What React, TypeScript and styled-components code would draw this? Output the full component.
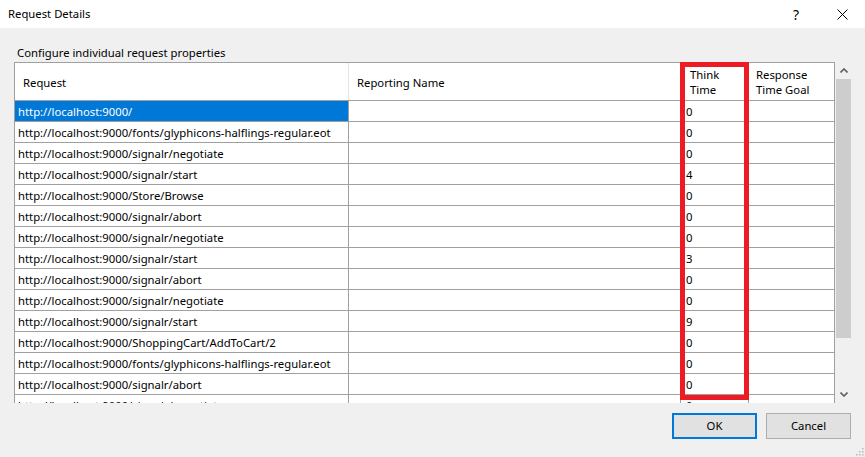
import React from "react";
import styled, { createGlobalStyle } from "styled-components";

const GlobalStyle = createGlobalStyle`
  html, body {
    margin: 0;
    padding: 0;
    background: #f0f0f0;
  }
  body {
    font-family: "Noto Sans", "Open Sans", sans-serif;
    font-size: 11.3px;
    color: #000;
  }
`;

const FONT = `"Noto Sans", "Open Sans", sans-serif`;

const Window = styled.div`
  position: relative;
  width: 865px;
  height: 457px;
  background: #f0f0f0;
  display: flex;
  flex-direction: column;
  overflow: hidden;
  font-family: ${FONT};
  font-size: 11.3px;
`;

const TitleBar = styled.div`
  height: 28px;
  flex: 0 0 28px;
  background: #ffffff;
  display: flex;
  align-items: center;
  padding-left: 8px;
`;

const Title = styled.div`
  flex: 1;
  line-height: 16px;
  margin-top: -1px;
`;

const TitleButton = styled.div`
  width: 46px;
  height: 28px;
  display: flex;
  align-items: center;
  justify-content: center;
  font-size: 14px;
`;

const Body = styled.div`
  display: flex;
  flex-direction: column;
  padding: 0 13px 0 14px;
`;

const Caption = styled.div`
  height: 34px;
  display: flex;
  align-items: flex-end;
  padding: 0 0 1px 3px;
  box-sizing: border-box;
  line-height: 16px;
`;

const GridArea = styled.div`
  position: relative;
  height: 341px;
  display: flex;
`;

const Table = styled.div`
  width: 821px;
  height: 341px;
  box-sizing: border-box;
  border-top: 1px solid #a0a0a0;
  border-left: 1px solid #a0a0a0;
  border-right: 1px solid #a0a0a0;
  background: #ffffff;
  overflow: hidden;
`;

const COLS = "334px 332px 68px 85px";

const HeaderRow = styled.div`
  display: grid;
  grid-template-columns: ${COLS};
  height: 37px;
  border-bottom: 1px solid #a0a0a0;
`;

const HeaderCell = styled.div<{ $pad: number; $last?: boolean }>`
  display: flex;
  align-items: center;
  padding-left: ${(p) => p.$pad}px;
  border-right: ${(p) => (p.$last ? "none" : "1px solid #e5e5e5")};
  line-height: 15px;
  padding-top: 1px;
`;

const Row = styled.div`
  display: grid;
  grid-template-columns: ${COLS};
  height: 20px;
  border-bottom: 1px solid #a0a0a0;
`;

const Cell = styled.div<{ $selected?: boolean; $pad?: number; $last?: boolean }>`
  display: flex;
  align-items: center;
  padding-left: ${(p) => p.$pad ?? 3}px;
  border-right: ${(p) => (p.$last ? "none" : "1px solid #a0a0a0")};
  background: ${(p) => (p.$selected ? "#0078d7" : "#ffffff")};
  color: ${(p) => (p.$selected ? "#ffffff" : "#000000")};
  white-space: nowrap;
  overflow: hidden;
`;

const ScrollBar = styled.div`
  width: 17px;
  height: 341px;
  display: flex;
  flex-direction: column;
  align-items: center;
  background: #f0f0f0;
`;

const ScrollArrow = styled.div`
  height: 17px;
  width: 17px;
  display: flex;
  align-items: center;
  justify-content: center;
`;

const ScrollTrack = styled.div`
  flex: 1;
  width: 17px;
  display: flex;
  justify-content: center;
`;

const Thumb = styled.div`
  width: 15px;
  height: 259px;
  background: #cdcdcd;
`;

const Highlight = styled.div`
  position: absolute;
  left: 666px;
  top: 0;
  width: 69px;
  height: 338px;
  box-sizing: border-box;
  border: 5px solid #ed1c24;
  pointer-events: none;
`;

const Footer = styled.div`
  display: flex;
  justify-content: flex-end;
  gap: 9px;
  padding: 10px 14px 0 0;
`;

const Button = styled.div<{ $default?: boolean }>`
  width: 85px;
  height: 26px;
  box-sizing: border-box;
  background: #e1e1e1;
  border: ${(p) => (p.$default ? "2px solid #0078d7" : "1px solid #adadad")};
  display: flex;
  align-items: center;
  justify-content: center;
  line-height: 16px;
`;

const Grip = styled.svg`
  position: absolute;
  right: 1px;
  bottom: 1px;
`;

const rows: [string, string][] = [
  ["http://localhost:9000/", "0"],
  ["http://localhost:9000/fonts/glyphicons-halflings-regular.eot", "0"],
  ["http://localhost:9000/signalr/negotiate", "0"],
  ["http://localhost:9000/signalr/start", "4"],
  ["http://localhost:9000/Store/Browse", "0"],
  ["http://localhost:9000/signalr/abort", "0"],
  ["http://localhost:9000/signalr/negotiate", "0"],
  ["http://localhost:9000/signalr/start", "3"],
  ["http://localhost:9000/signalr/abort", "0"],
  ["http://localhost:9000/signalr/negotiate", "0"],
  ["http://localhost:9000/signalr/start", "9"],
  ["http://localhost:9000/ShoppingCart/AddToCart/2", "0"],
  ["http://localhost:9000/fonts/glyphicons-halflings-regular.eot", "0"],
  ["http://localhost:9000/signalr/abort", "0"],
  ["http://localhost:9000/signalr/negotiate", "0"],
];

const CloseIcon = () => (
  <svg width="11" height="11" viewBox="0 0 11 11">
    <path d="M0.5 0.5 L10.5 10.5 M10.5 0.5 L0.5 10.5" stroke="#000" strokeWidth="1" fill="none" />
  </svg>
);

const Chevron = ({ up }: { up?: boolean }) => (
  <svg width="8" height="5" viewBox="0 0 8 5">
    <path
      d={up ? "M0.5 4.5 L4 1 L7.5 4.5" : "M0.5 0.5 L4 4 L7.5 0.5"}
      stroke="#606060"
      strokeWidth="1.6"
      fill="none"
    />
  </svg>
);

export default function App() {
  return (
    <>
      <GlobalStyle />
      <Window>
        <TitleBar>
          <Title>Request Details</Title>
          <TitleButton>?</TitleButton>
          <TitleButton>
            <CloseIcon />
          </TitleButton>
        </TitleBar>
        <Body>
          <Caption>Configure individual request properties</Caption>
          <GridArea>
            <Table>
              <HeaderRow>
                <HeaderCell $pad={8}>Request</HeaderCell>
                <HeaderCell $pad={8}>Reporting Name</HeaderCell>
                <HeaderCell $pad={9}>
                  Think
                  <br />
                  Time
                </HeaderCell>
                <HeaderCell $pad={7} $last>
                  Response
                  <br />
                  Time Goal
                </HeaderCell>
              </HeaderRow>
              {rows.map(([url, think], i) => (
                <Row key={i}>
                  <Cell $selected={i === 0}>{url}</Cell>
                  <Cell />
                  <Cell $pad={5}>{think}</Cell>
                  <Cell $last />
                </Row>
              ))}
            </Table>
            <ScrollBar>
              <ScrollArrow>
                <Chevron up />
              </ScrollArrow>
              <ScrollTrack>
                <Thumb />
              </ScrollTrack>
              <ScrollArrow>
                <Chevron />
              </ScrollArrow>
            </ScrollBar>
            <Highlight />
          </GridArea>
        </Body>
        <Footer>
          <Button $default>OK</Button>
          <Button>Cancel</Button>
        </Footer>
        <Grip width="9" height="9" viewBox="0 0 9 9">
          {[
            [7, 1],
            [7, 4],
            [4, 4],
            [7, 7],
            [4, 7],
            [1, 7],
          ].map(([x, y], i) => (
            <rect key={i} x={x} y={y} width="1.5" height="1.5" fill="#b8b8b8" />
          ))}
        </Grip>
      </Window>
    </>
  );
}
